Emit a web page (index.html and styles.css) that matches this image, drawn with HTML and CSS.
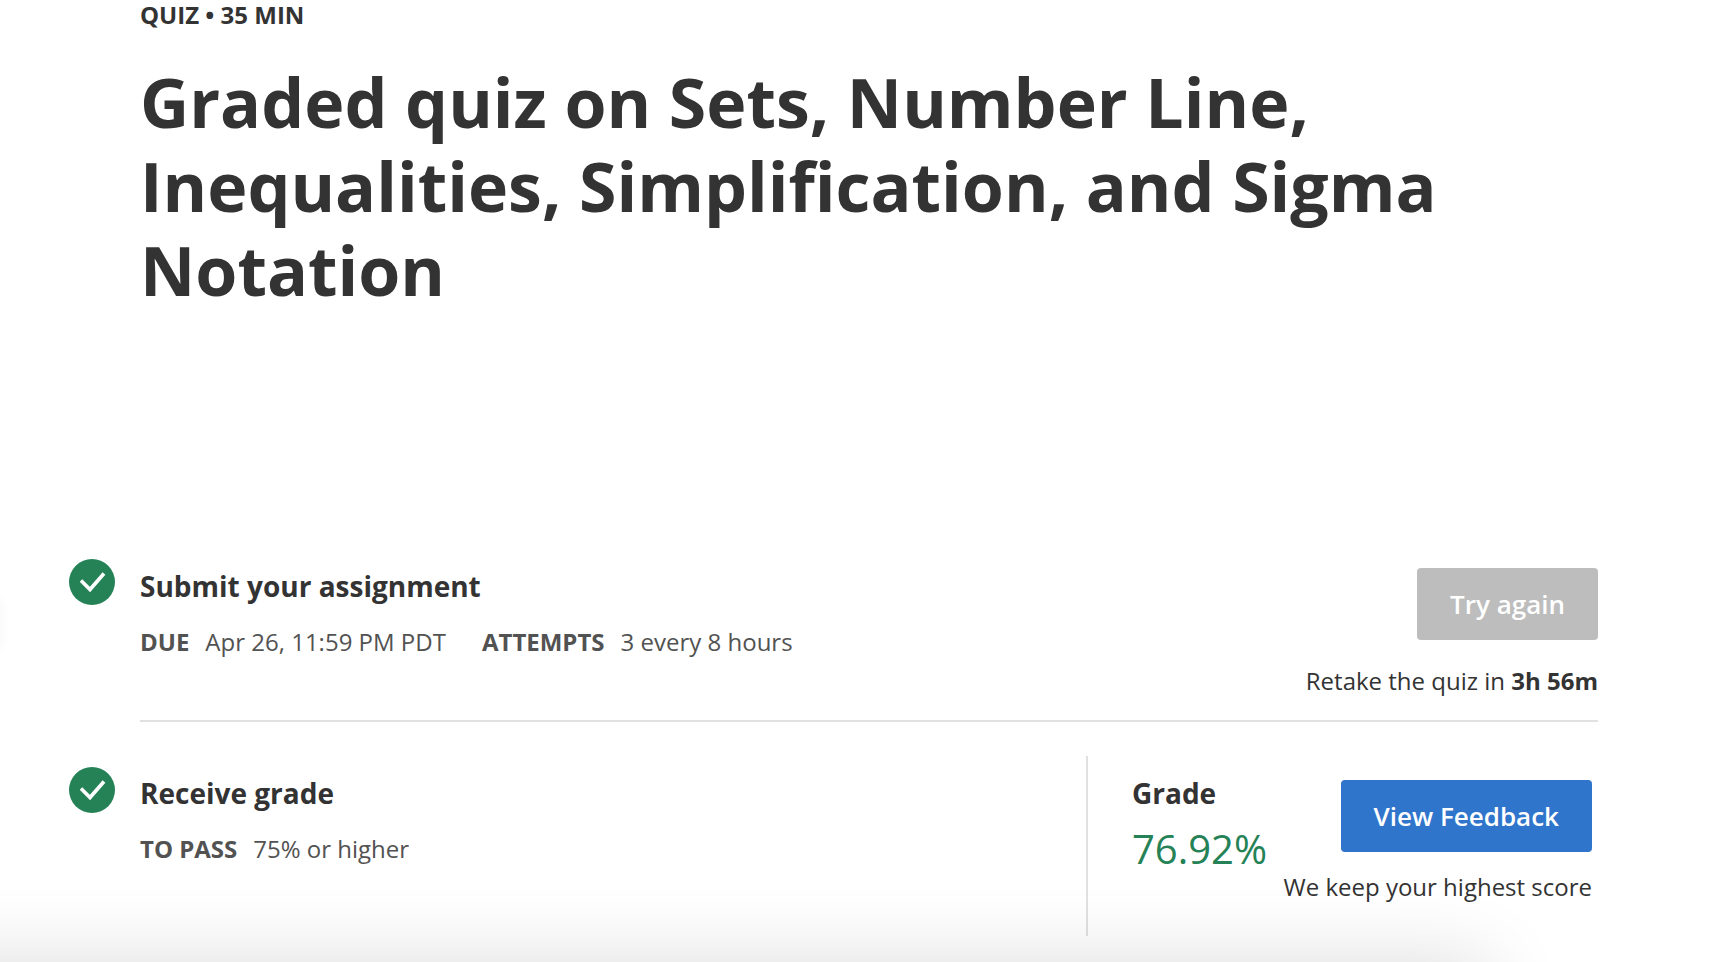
FILE: index.html
```html
<!DOCTYPE html>
<html lang="en">
<head>
<meta charset="utf-8">
<meta name="viewport" content="width=device-width, initial-scale=1">
<title>Graded quiz</title>
<link rel="stylesheet" href="styles.css">
</head>
<body>
<main class="page">
  <header class="intro">
    <p class="kicker">QUIZ • 35 MIN</p>
    <h1 class="title">Graded quiz on Sets, Number Line, Inequalities, Simplification, and Sigma Notation</h1>
  </header>

  <section class="step">
    <svg class="check" viewBox="0 0 46 46" aria-hidden="true"><circle cx="23" cy="23" r="23" fill="#258256"/><path d="M12 21.500 21 30.500 35 14.500" fill="none" stroke="#fff" stroke-width="3.600"/></svg>
    <div class="row row-submit">
      <div class="info">
        <h2 class="heading">Submit your assignment</h2>
        <dl class="facts">
          <div class="fact"><dt>DUE</dt><dd>Apr 26, 11:59 PM PDT</dd></div>
          <div class="fact"><dt>ATTEMPTS</dt><dd>3 every 8 hours</dd></div>
        </dl>
      </div>
      <div class="action">
        <button class="button" type="button" disabled>Try again</button>
        <p class="note">Retake the quiz in <strong>3h 56m</strong></p>
      </div>
    </div>
  </section>

  <section class="step step-grade">
    <svg class="check" viewBox="0 0 46 46" aria-hidden="true"><circle cx="23" cy="23" r="23" fill="#258256"/><path d="M12 21.500 21 30.500 35 14.500" fill="none" stroke="#fff" stroke-width="3.600"/></svg>
    <div class="row">
      <div class="info info-grade">
        <h2 class="heading">Receive grade</h2>
        <dl class="facts">
          <div class="fact"><dt>TO PASS</dt><dd>75% or higher</dd></div>
        </dl>
      </div>
      <div class="result">
        <div class="score">
          <h2 class="heading">Grade</h2>
          <p class="percent">76.92%</p>
        </div>
        <div class="action action-feedback">
          <button class="button button-primary" type="button">View Feedback</button>
          <p class="note">We keep your highest score</p>
        </div>
      </div>
    </div>
  </section>
</main>
<div class="bottom-shade"></div>
<div class="side-shade"></div>
</body>
</html>
```
FILE: styles.css
```css
* { box-sizing: border-box; }
body {
  margin: 0;
  min-height: 100vh;
  background: #fff;
  color: #333;
  font-family: "Open Sans", sans-serif;
  font-size: 24px;
  line-height: 36px;
  overflow: hidden;
}
h1, h2, p, dl, dd { margin: 0; }

.page { padding: 0 116px 0 69px; }
.intro { padding-left: 71px; }
.kicker { font-weight: 700; line-height: 30px; }
.title {
  margin-top: 30px;
  font-size: 68px;
  font-weight: 700;
  line-height: 84px;
}

.step {
  display: grid;
  grid-template-columns: 46px 1fr;
  column-gap: 25px;
  margin-top: 247px;
}
.check { display: block; width: 46px; height: 46px; }
.row { display: flex; justify-content: space-between; }
.row-submit {
  padding: 9px 0 21px;
  border-bottom: 2px solid #e1e1e1;
}
.heading { font-size: 28px; font-weight: 700; line-height: 36px; }
.facts {
  display: flex;
  gap: 36px;
  margin-top: 20px;
  color: #525252;
}
.fact { display: flex; gap: 16px; }
.fact dt { font-weight: 700; }

.action {
  display: flex;
  flex-direction: column;
  align-items: flex-end;
  white-space: nowrap;
}
.button {
  height: 72px;
  padding: 0 33px;
  border: 0;
  border-radius: 4px;
  background: #bdbdbd;
  color: #fff;
  font: 600 26px/36px "Open Sans", sans-serif;
}
.button-primary { background: #2f75cb; }
.note { margin-top: 23px; }

.step-grade { margin-top: 34px; }
.step-grade .check { margin-top: 11px; }
.info-grade { padding-top: 19px; }
.result {
  display: flex;
  justify-content: space-between;
  width: 512px;
  height: 180px;
  padding-right: 6px;
  border-left: 2px solid #e1e1e1;
}
.score { padding: 19px 0 0 44px; }
.percent {
  margin-top: 14px;
  color: #258256;
  font-size: 40px;
  line-height: 48px;
}
.action-feedback { padding-top: 24px; }
.action-feedback .note { margin-top: 17px; }

/* Soft shadows cast by panels that sit just outside the window */
.bottom-shade, .side-shade { position: fixed; pointer-events: none; }
.bottom-shade {
  right: 226px;
  bottom: -100px;
  left: -100px;
  height: 100px;
  box-shadow: 0 0 80px rgba(0, 0, 0, 0.14);
}
.side-shade {
  top: 600px;
  left: -40px;
  width: 40px;
  height: 50px;
  box-shadow: 0 0 12px rgba(0, 0, 0, 0.04);
}
```
